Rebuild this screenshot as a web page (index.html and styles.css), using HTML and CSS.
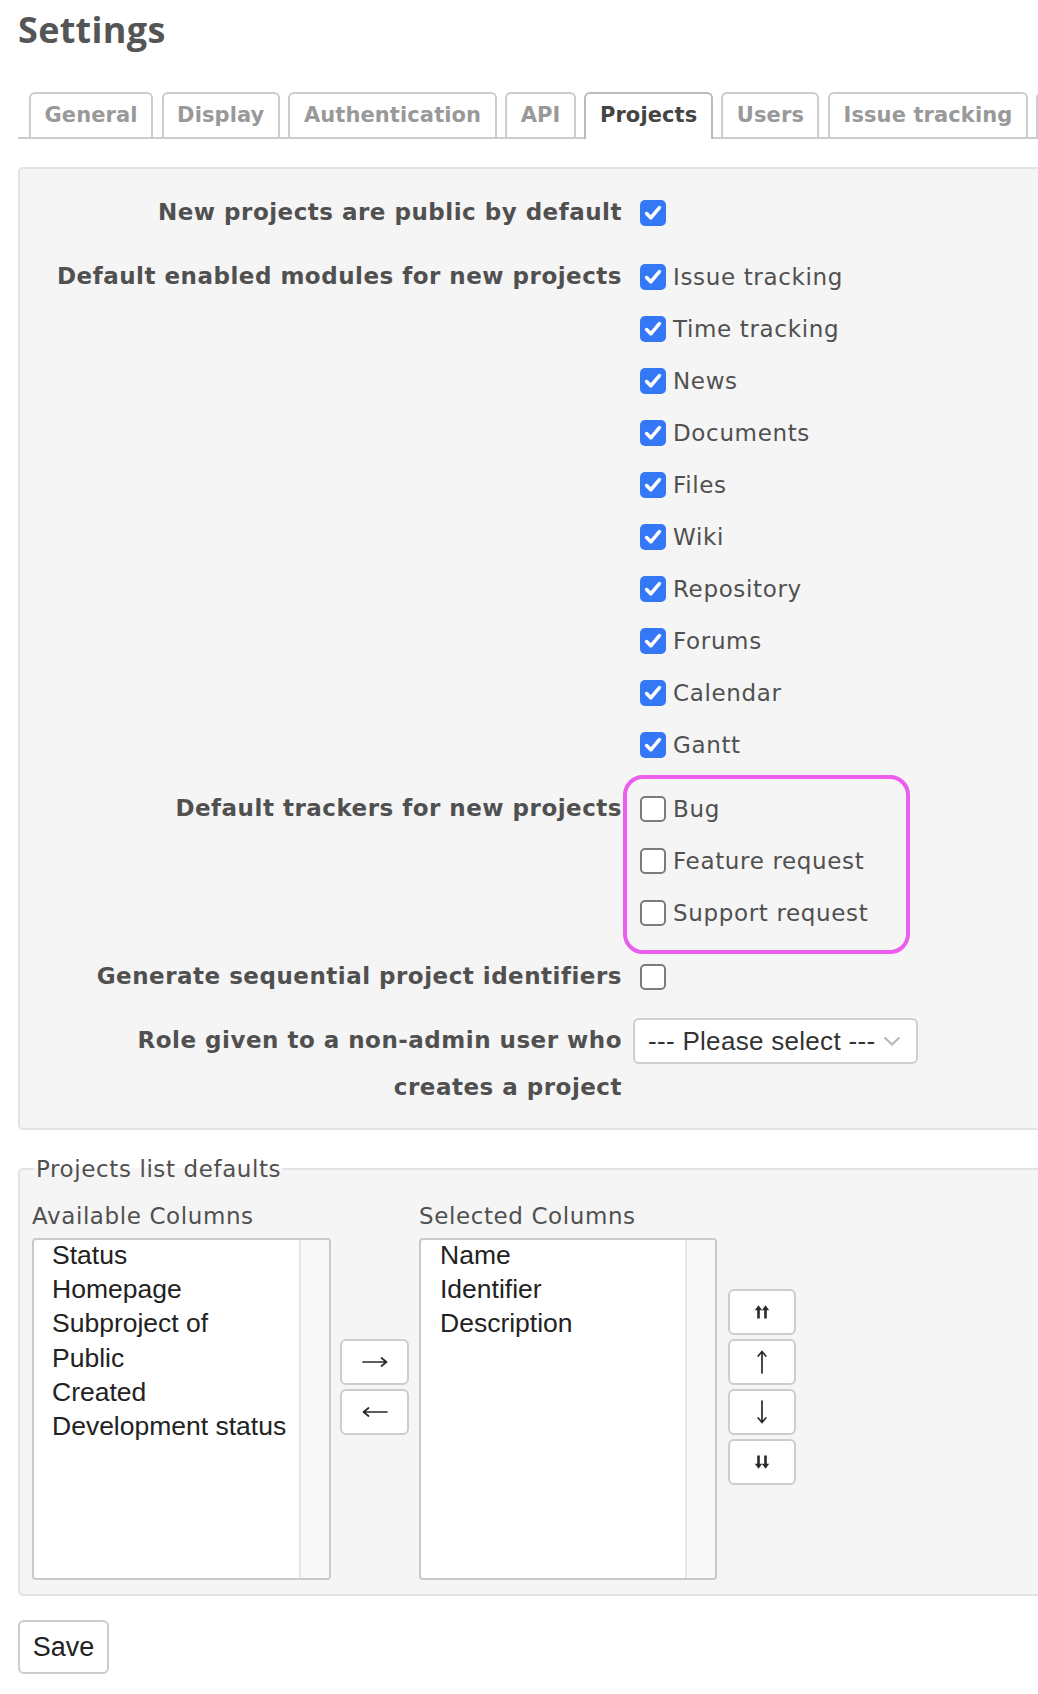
FILE: index.html
```html
<!DOCTYPE html>
<html lang="en">
<head>
<meta charset="utf-8">
<title>Settings</title>
<link rel="stylesheet" href="styles.css">
</head>
<body>
<div class="page">
  <h2 class="title">Settings</h2>

  <div class="tabs">
    <a class="tab">General</a>
    <a class="tab">Display</a>
    <a class="tab">Authentication</a>
    <a class="tab">API</a>
    <a class="tab active">Projects</a>
    <a class="tab">Users</a>
    <a class="tab">Issue tracking</a>
    <a class="tab tab-more" aria-hidden="true"></a>
  </div>

  <div class="box">
    <div class="row">
      <div class="lbl">New projects are public by default</div>
      <div class="vals">
        <div class="item"><span class="cb on"><svg viewBox="0 0 26 26"><path d="M6.6 13.6 L10.8 17.8 L19.4 7.6"/></svg></span></div>
      </div>
    </div>

    <div class="row">
      <div class="lbl">Default enabled modules for new projects</div>
      <div class="vals">
        <div class="item"><span class="cb on"><svg viewBox="0 0 26 26"><path d="M6.6 13.6 L10.8 17.8 L19.4 7.6"/></svg></span>Issue tracking</div>
        <div class="item"><span class="cb on"><svg viewBox="0 0 26 26"><path d="M6.6 13.6 L10.8 17.8 L19.4 7.6"/></svg></span>Time tracking</div>
        <div class="item"><span class="cb on"><svg viewBox="0 0 26 26"><path d="M6.6 13.6 L10.8 17.8 L19.4 7.6"/></svg></span>News</div>
        <div class="item"><span class="cb on"><svg viewBox="0 0 26 26"><path d="M6.6 13.6 L10.8 17.8 L19.4 7.6"/></svg></span>Documents</div>
        <div class="item"><span class="cb on"><svg viewBox="0 0 26 26"><path d="M6.6 13.6 L10.8 17.8 L19.4 7.6"/></svg></span>Files</div>
        <div class="item"><span class="cb on"><svg viewBox="0 0 26 26"><path d="M6.6 13.6 L10.8 17.8 L19.4 7.6"/></svg></span>Wiki</div>
        <div class="item"><span class="cb on"><svg viewBox="0 0 26 26"><path d="M6.6 13.6 L10.8 17.8 L19.4 7.6"/></svg></span>Repository</div>
        <div class="item"><span class="cb on"><svg viewBox="0 0 26 26"><path d="M6.6 13.6 L10.8 17.8 L19.4 7.6"/></svg></span>Forums</div>
        <div class="item"><span class="cb on"><svg viewBox="0 0 26 26"><path d="M6.6 13.6 L10.8 17.8 L19.4 7.6"/></svg></span>Calendar</div>
        <div class="item"><span class="cb on"><svg viewBox="0 0 26 26"><path d="M6.6 13.6 L10.8 17.8 L19.4 7.6"/></svg></span>Gantt</div>
      </div>
    </div>

    <div class="row">
      <div class="lbl">Default trackers for new projects</div>
      <div class="vals trackers">
        <div class="item"><span class="cb off"></span>Bug</div>
        <div class="item"><span class="cb off"></span>Feature request</div>
        <div class="item"><span class="cb off"></span>Support request</div>
      </div>
    </div>

    <div class="row">
      <div class="lbl">Generate sequential project identifiers</div>
      <div class="vals">
        <div class="item"><span class="cb off"></span></div>
      </div>
    </div>

    <div class="row">
      <div class="lbl">Role given to a non-admin user who creates a project</div>
      <div class="vals">
        <div class="item">
          <div class="sel"><span class="sel-text">--- Please select ---</span><svg class="chev" viewBox="0 0 18 10"><path d="M1.5 1.5 L9 8.5 L16.5 1.5"/></svg></div>
        </div>
      </div>
    </div>
  </div>

  <fieldset class="defaults">
    <legend>Projects list defaults</legend>
    <div class="cols">
      <div class="col col-avail">
        <div class="col-label">Available Columns</div>
        <div class="listbox">
          <div class="opts">
            <div class="opt">Status</div>
            <div class="opt">Homepage</div>
            <div class="opt">Subproject of</div>
            <div class="opt">Public</div>
            <div class="opt">Created</div>
            <div class="opt">Development status</div>
          </div>
          <div class="track"></div>
        </div>
      </div>
      <div class="btns btns-move">
        <button class="btn" type="button" title="Add"><svg class="ico-h" viewBox="0 0 26 12"><path d="M1 6 H24.5 M19.5 2 L24.5 6 L19.5 10"/></svg></button>
        <button class="btn" type="button" title="Remove"><svg class="ico-h" viewBox="0 0 26 12"><path d="M25 6 H1.5 M6.5 2 L1.5 6 L6.5 10"/></svg></button>
      </div>
      <div class="col col-sel">
        <div class="col-label">Selected Columns</div>
        <div class="listbox">
          <div class="opts">
            <div class="opt">Name</div>
            <div class="opt">Identifier</div>
            <div class="opt">Description</div>
          </div>
          <div class="track"></div>
        </div>
      </div>
      <div class="btns btns-order">
        <button class="btn" type="button" title="Move to top"><svg class="ico-d" viewBox="0 0 16 14"><path class="st" d="M4.5 4 V13.5 M11.5 4 V13.5"/><path class="hd" d="M4.5 0.3 L8.2 5.2 H0.8 Z M11.5 0.3 L15.2 5.2 H7.8 Z"/></svg></button>
        <button class="btn" type="button" title="Move up"><svg class="ico-v" viewBox="0 0 12 24"><path d="M6 23 V1.5 M2.2 6 L6 1.5 L9.8 6"/></svg></button>
        <button class="btn" type="button" title="Move down"><svg class="ico-v" viewBox="0 0 12 24"><path d="M6 1 V22.5 M2.2 18 L6 22.5 L9.8 18"/></svg></button>
        <button class="btn" type="button" title="Move to bottom"><svg class="ico-d" viewBox="0 0 16 14"><path class="st" d="M4.5 0.5 V10 M11.5 0.5 V10"/><path class="hd" d="M4.5 13.7 L8.2 8.8 H0.8 Z M11.5 13.7 L15.2 8.8 H7.8 Z"/></svg></button>
      </div>
    </div>
  </fieldset>

  <button class="save" type="button">Save</button>
</div>
</body>
</html>
```

FILE: styles.css
```css
html, body {
  overflow: hidden;
  background: #fff;
}

body {
  margin: 0;
  font-family: "DejaVu Sans", Verdana, sans-serif;
  color: #505050;
}

.page {
  width: 1160px;
  padding-left: 18px;
}

.title {
  margin: 0;
  padding-top: 5px;
  font-family: "Open Sans", "DejaVu Sans", sans-serif;
  font-weight: 700;
  font-size: 36px;
  line-height: 49px;
  letter-spacing: 0.3px;
  color: #555;
}

/* tabs */
.tabs {
  margin-top: 38px;
  display: flex;
  align-items: flex-end;
  gap: 8.5px;
  padding-left: 11px;
  border-bottom: 2px solid #cccccc;
  height: 45px;
  white-space: nowrap;
}

.tab {
  flex-shrink: 0;
  height: 45px;
  box-sizing: border-box;
  padding: 0 13.5px;
  border: 2px solid #cccccc;
  border-bottom: none;
  border-radius: 6px 6px 0 0;
  font-weight: 700;
  font-size: 21px;
  letter-spacing: 0.1px;
  line-height: 43px;
  color: #999;
  background: #fff;
}

.tab.active {
  color: #444;
  border-color: #bbbbbb;
  height: 47px;
  margin-bottom: -2px;
  padding-bottom: 2px;
}

.tab-more {
  width: 60px;
}

/* main settings box */
.box {
  margin-top: 28px;
  background: #f5f5f5;
  border: 2px solid #e3e3e3;
  border-radius: 5px;
  padding: 12px 0 11px;
}

.row {
  display: flex;
  padding: 6px 0;
}

.lbl {
  flex-shrink: 0;
  width: 602px;
  box-sizing: border-box;
  padding-left: 24px;
  padding-top: 2px;
  text-align: right;
  font-weight: 700;
  font-size: 23px;
  letter-spacing: 0.5px;
  line-height: 47px;
  color: #505050;
}

.vals {
  margin-left: 18px;
  display: flex;
  flex-direction: column;
}

.item {
  height: 52px;
  display: flex;
  align-items: center;
  gap: 7px;
  font-size: 23px;
  letter-spacing: 0.65px;
  color: #505050;
  white-space: nowrap;
}

.cb {
  width: 26px;
  height: 26px;
  box-sizing: border-box;
  border-radius: 5px;
  flex-shrink: 0;
  display: block;
}

.cb.on {
  background: #3478f6;
}

.cb.on svg {
  display: block;
  width: 26px;
  height: 26px;
}

.cb.on path {
  fill: none;
  stroke: #fff;
  stroke-width: 3.6;
  stroke-linecap: round;
  stroke-linejoin: round;
}

.cb.off {
  background: #fff;
  border: 2px solid #7b7b7b;
}

/* annotation around trackers */
.trackers {
  position: relative;
}

.trackers::after {
  content: "";
  position: absolute;
  left: -17px;
  top: -8px;
  width: 287px;
  height: 179px;
  box-sizing: border-box;
  border: 4px solid #ea5ded;
  border-radius: 20px;
  pointer-events: none;
}

/* select */
.sel {
  margin-left: -7px;
  width: 285px;
  height: 46px;
  box-sizing: border-box;
  border: 2px solid #cfcfcf;
  border-radius: 6px;
  background: #fff;
  display: flex;
  align-items: center;
  padding: 0 15px 0 13px;
  font-family: "Liberation Sans", Arial, sans-serif;
  font-size: 26px;
  letter-spacing: 0.3px;
  color: #333;
}

.sel-text {
  flex: 1;
}

.chev {
  width: 18px;
  height: 10px;
}

.chev path {
  fill: none;
  stroke: #b8b8b8;
  stroke-width: 2.2;
}

/* projects list defaults */
.defaults {
  margin: 26px 0 0;
  min-width: 0;
  background: #f5f5f5;
  border: 2px solid #e3e3e3;
  border-radius: 5px;
  padding: 17px 12px 14px 12px;
}

.defaults legend {
  padding: 0 2px;
  margin-left: 2px;
  font-size: 23px;
  letter-spacing: 0.6px;
  color: #505050;
}

.cols {
  display: flex;
  align-items: center;
}

.col-label {
  font-size: 23px;
  letter-spacing: 0.6px;
  line-height: 34px;
  color: #505050;
  white-space: nowrap;
}

.listbox {
  margin-top: 5px;
  height: 342px;
  box-sizing: border-box;
  border: 2px solid #c9c9c9;
  border-radius: 4px;
  background: #fff;
  display: flex;
  overflow: hidden;
}

.col-avail .listbox {
  width: 299px;
}

.col-sel .listbox {
  width: 298px;
}

.opts {
  flex: 1;
  margin-top: -2px;
  padding-left: 18px;
  font-family: "Liberation Sans", Arial, sans-serif;
  font-size: 26.5px;
  line-height: 34.2px;
  color: #222;
  white-space: nowrap;
}

.col-sel .opts {
  padding-left: 19px;
}

.track {
  width: 28px;
  flex-shrink: 0;
  background: #f8f8f8;
  border-left: 2px solid #e6e6e6;
}

.btns {
  display: flex;
  flex-direction: column;
  gap: 4px;
  margin-bottom: 6px;
}

.btns-move {
  margin-left: 9px;
  margin-right: 10px;
}

.btns-order {
  margin-left: 11px;
}

.btn {
  width: 69px;
  height: 46px;
  box-sizing: border-box;
  border: 2px solid #cdcdcd;
  border-radius: 6px;
  background: #fff;
  padding: 0;
  display: flex;
  align-items: center;
  justify-content: center;
}

.btns-order .btn {
  width: 68px;
}

.btn svg path {
  fill: none;
  stroke: #2a2a2a;
  stroke-width: 1.7;
  stroke-linecap: round;
  stroke-linejoin: round;
}

.ico-h {
  width: 26px;
  height: 12px;
}

.ico-v {
  width: 12px;
  height: 24px;
}

.ico-d {
  width: 16px;
  height: 14px;
}

.btn svg path.st {
  stroke-width: 2.6;
  stroke-linecap: butt;
}

.btn svg path.hd {
  fill: #2a2a2a;
  stroke: none;
}

.save {
  margin-top: 24px;
  width: 91px;
  height: 54px;
  box-sizing: border-box;
  border: 2px solid #cccccc;
  border-radius: 6px;
  background: #fff;
  padding: 0;
  font-family: "Liberation Sans", Arial, sans-serif;
  font-size: 27px;
  color: #222;
}
```
